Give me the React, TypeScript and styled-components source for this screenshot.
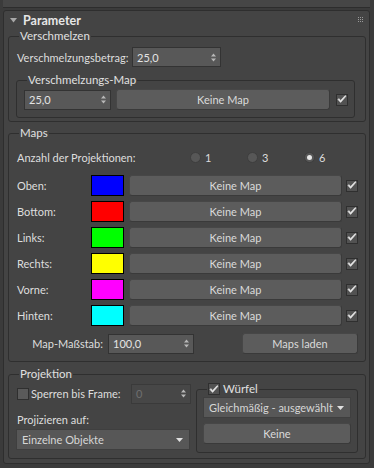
import React from "react";
import styled, { createGlobalStyle } from "styled-components";

const Global = createGlobalStyle`
  html, body { margin: 0; padding: 0; background: #3b3b3b; }
  body {
    font-family: Lato, "Liberation Sans", Arial, sans-serif;
    font-size: 11px;
    color: #dcdcdc;
    width: 374px;
    height: 468px;
    overflow: hidden;
  }
  * { box-sizing: border-box; }
`;

const PrevRollout = styled.div`
  height: 8px;
  margin: 0 4px 0 3px;
  background: #464646;
  border-bottom: 1px solid #2d2d2d;
`;

const Rollout = styled.section`
  margin: 2px 4px 0 3px;
  height: 454px;
  background: #444444;
  border: 1px solid #2e2e2e;
  border-radius: 3px;
  padding: 0 3px 4px 4px;
  display: flex;
  flex-direction: column;
`;

const Header = styled.div`
  height: 18px;
  display: flex;
  align-items: center;
  padding: 0 2px 0 2px;
`;

const Title = styled.span`
  font-weight: bold;
  font-size: 12.5px;
  color: #e6e6e6;
  margin-left: 6px;
  flex: 1;
`;

const Stack = styled.div`
  display: flex;
  flex-direction: column;
`;

const Group = styled.fieldset<{ $mt?: number; $pt?: number; $pb?: number; $pl?: number; $pr?: number; $mr?: number; $mb?: number }>`
  margin: ${(p) => p.$mt ?? 0}px ${(p) => p.$mr ?? 0}px ${(p) => p.$mb ?? 0}px 0;
  min-width: 0;
  border: 1px solid #2f2f2f;
  border-radius: 3px;
  padding: ${(p) => p.$pt ?? 0}px ${(p) => p.$pr ?? 7}px ${(p) => p.$pb ?? 0}px ${(p) => p.$pl ?? 7}px;
  display: flex;
  flex-direction: column;
`;

const SubGroup = styled(Group)`
  flex: 1;
`;

const Legend = styled.legend<{ $ml?: number }>`
  margin-left: ${(p) => p.$ml ?? 3}px;
  padding: 0 1px;
  line-height: 14px;
  height: 14px;
  display: flex;
  align-items: center;
  gap: 3px;
  font-size: 11.5px;
  color: #e0e0e0;
`;

const Row = styled.div<{ $h?: number; $mt?: number; $pl?: number }>`
  display: flex;
  align-items: center;
  height: ${(p) => p.$h ?? 21}px;
  margin-top: ${(p) => p.$mt ?? 0}px;
  padding-left: ${(p) => p.$pl ?? 0}px;
`;

const Label = styled.span<{ $w?: number; $ml?: number; $right?: boolean }>`
  ${(p) => (p.$w ? `width: ${p.$w}px; flex: none;` : "")}
  margin-left: ${(p) => p.$ml ?? 0}px;
  text-align: ${(p) => (p.$right ? "right" : "left")};
  white-space: nowrap;
  color: #dedede;
`;

const SpinBox = styled.div<{ $w: number; $ml?: number; $disabled?: boolean; $h?: number }>`
  width: ${(p) => p.$w}px;
  height: ${(p) => p.$h ?? 20}px;
  margin-left: ${(p) => p.$ml ?? 0}px;
  flex: none;
  display: flex;
  align-items: center;
  justify-content: space-between;
  padding: 0 4px 0 4px;
  background: ${(p) => (p.$disabled ? "#474747" : "#585858")};
  border: 1px solid ${(p) => (p.$disabled ? "#3a3a3a" : "#333333")};
  color: ${(p) => (p.$disabled ? "#6f6f6f" : "#e4e4e4")};
`;

const Button = styled.div<{ $w?: number; $ml?: number; $mr?: number; $mt?: number; $h?: number }>`
  ${(p) => (p.$w ? `width: ${p.$w}px; flex: none;` : "flex: 1;")}
  height: ${(p) => p.$h ?? 21}px;
  margin-left: ${(p) => p.$ml ?? 0}px;
  margin-right: ${(p) => p.$mr ?? 0}px;
  margin-top: ${(p) => p.$mt ?? 0}px;
  display: flex;
  align-items: center;
  justify-content: center;
  background: #5c5c5c;
  border: 1px solid #3a3a3a;
  border-top-color: #474747;
  border-left-color: #474747;
  border-radius: 3px;
  color: #dadada;
`;

const BlockButton = styled(Button)`
  flex: none;
`;

const Dropdown = styled.div<{ $h?: number; $mt?: number }>`
  height: ${(p) => p.$h ?? 21}px;
  flex: none;
  margin-top: ${(p) => p.$mt ?? 0}px;
  display: flex;
  align-items: center;
  justify-content: space-between;
  padding: 0 6px 0 5px;
  background: #575757;
  border: 1px solid #3f3f3f;
  color: #d6d6d6;
  white-space: nowrap;
`;

const Box = styled.span<{ $checked?: boolean; $ml?: number }>`
  width: 12px;
  height: 12px;
  flex: none;
  margin-left: ${(p) => p.$ml ?? 0}px;
  display: inline-flex;
  align-items: center;
  justify-content: center;
  background: ${(p) => (p.$checked ? "#525252" : "#5a5a5a")};
  border: 1px solid #2f2f2f;
`;

const Swatch = styled.span<{ $c: string }>`
  width: 33px;
  height: 21px;
  flex: none;
  background: ${(p) => p.$c};
  border: 1px solid #000;
`;

const RadioItem = styled.span`
  width: 57px;
  flex: none;
  display: flex;
  align-items: center;
  gap: 4px;
`;

const RadioDot = styled.span<{ $on?: boolean }>`
  width: 11px;
  height: 11px;
  border-radius: 50%;
  background: #575757;
  border: 1px solid #3e3e3e;
  display: inline-flex;
  align-items: center;
  justify-content: center;
  &::after {
    content: "";
    width: 5px;
    height: 5px;
    border-radius: 50%;
    background: ${(p) => (p.$on ? "#e8e8e8" : "transparent")};
  }
`;

const Columns = styled.div`
  display: flex;
  gap: 6px;
`;

const LeftCol = styled.div`
  width: 174px;
  flex: none;
  display: flex;
  flex-direction: column;
  padding-top: 1px;
`;

const Grip = () => (
  <svg width="6" height="6" viewBox="0 0 6 6">
    {[0, 2, 4].map((y) =>
      [0, 2, 4].map((x) => <rect key={`${x}-${y}`} x={x} y={y} width="1" height="1" fill="#9a9a9a" />)
    )}
  </svg>
);

const Collapse = () => (
  <svg width="7" height="5" viewBox="0 0 7 5">
    <path d="M0 0 H7 L3.5 4.5 Z" fill="#a8a8a8" />
  </svg>
);

const SpinArrows = () => (
  <svg width="5" height="9" viewBox="0 0 5 9">
    <path d="M0 3.5 L2.5 0.5 L5 3.5 Z M0 5.5 L2.5 8.5 L5 5.5 Z" fill="#b8b8b8" />
  </svg>
);

const DownArrow = () => (
  <svg width="7" height="4" viewBox="0 0 7 4">
    <path d="M0 0 H7 L3.5 4 Z" fill="#e0e0e0" />
  </svg>
);

const Check = () => (
  <svg width="10" height="9" viewBox="0 0 10 9">
    <path d="M1 4.6 L3.6 7.4 L9 1.2 L8.2 0.6 L3.6 5.4 L1.9 3.6 Z" fill="#e6e6e6" stroke="#e6e6e6" strokeWidth="0.6" />
  </svg>
);

const CheckBox = ({ checked, ml }: { checked?: boolean; ml?: number }) => (
  <Box $checked={checked} $ml={ml}>
    {checked ? <Check /> : null}
  </Box>
);

const Spinner = ({ value, w, ml, disabled }: { value: string; w: number; ml?: number; disabled?: boolean }) => (
  <SpinBox $w={w} $ml={ml} $disabled={disabled}>
    <span>{value}</span>
    <SpinArrows />
  </SpinBox>
);

const maps = [
  { label: "Oben:", color: "#0000ff" },
  { label: "Bottom:", color: "#ff0000" },
  { label: "Links:", color: "#00ff00" },
  { label: "Rechts:", color: "#ffff00" },
  { label: "Vorne:", color: "#ff00ff" },
  { label: "Hinten:", color: "#00ffff" },
];

export default function App() {
  return (
    <>
      <Global />
      <PrevRollout />
      <Rollout>
        <Header>
          <Collapse />
          <Title>Parameter</Title>
          <Grip />
        </Header>
        <Stack>
          <Group $pt={4} $pb={3}>
            <Legend>Verschmelzen</Legend>
            <Row $h={20} $pl={1}>
              <Label $w={110}>Verschmelzungsbetrag:</Label>
              <Spinner value="25,0" w={89} ml={5} />
            </Row>
            <Group $mt={6} $mr={3} $pt={2} $pb={7} $pl={7} $pr={6}>
              <Legend>Verschmelzungs-Map</Legend>
              <Row $h={21}>
                <Spinner value="25,0" w={87} />
                <Button $ml={5}>Keine Map</Button>
                <CheckBox checked ml={6} />
              </Row>
            </Group>
          </Group>

          <Group $mt={4} $pt={7} $pb={7}>
            <Legend>Maps</Legend>
            <Row $h={20} $pl={1}>
              <Label $w={173}>Anzahl der Projektionen:</Label>
              <RadioItem>
                <RadioDot />
                <span>1</span>
              </RadioItem>
              <RadioItem>
                <RadioDot />
                <span>3</span>
              </RadioItem>
              <RadioItem>
                <RadioDot $on />
                <span>6</span>
              </RadioItem>
            </Row>
            {maps.map((m, i) => (
              <Row key={m.label} $mt={i === 0 ? 8 : 5} $pl={1}>
                <Label $w={74}>{m.label}</Label>
                <Swatch $c={m.color} />
                <Button $ml={5}>Keine Map</Button>
                <CheckBox checked ml={4} />
              </Row>
            ))}
            <Row $mt={7} $pl={1}>
              <Label $w={86} $right>Map-Maßstab:</Label>
              <Spinner value="100,0" w={86} ml={5} />
              <Button $w={116} $ml={48}>Maps laden</Button>
            </Row>
          </Group>

          <Group $mt={5} $pt={1} $pb={5} $pr={7}>
            <Legend>Projektion</Legend>
            <Columns>
              <LeftCol>
                <Row $h={21} $pl={1}>
                  <CheckBox />
                  <Label $w={100} $ml={2}>Sperren bis Frame:</Label>
                  <Spinner value="0" w={60} disabled />
                </Row>
                <Row $h={14} $mt={8} $pl={1}>
                  <Label>Projizieren auf:</Label>
                </Row>
                <Dropdown $mt={3}>
                  <span>Einzelne Objekte</span>
                  <DownArrow />
                </Dropdown>
              </LeftCol>
              <SubGroup $pt={1} $pb={8} $pl={6} $pr={6}>
                <Legend $ml={4}>
                  <CheckBox checked />
                  <span>Würfel</span>
                </Legend>
                <Dropdown>
                  <span>Gleichmäßig - ausgewählt</span>
                  <DownArrow />
                </Dropdown>
                <BlockButton $mt={5}>Keine</BlockButton>
              </SubGroup>
            </Columns>
          </Group>
        </Stack>
      </Rollout>
    </>
  );
}
